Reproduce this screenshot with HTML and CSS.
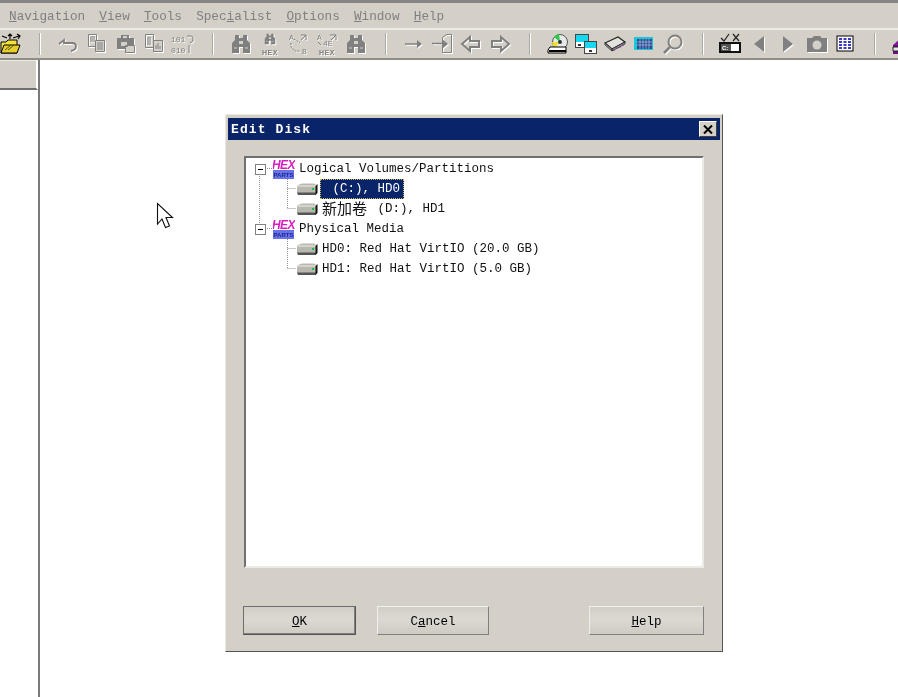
FILE: index.html
```html
<!DOCTYPE html>
<html lang="en">
<head>
<meta charset="utf-8">
<title>Edit Disk</title>
<link rel="stylesheet" href="styles.css">
</head>
<body>
<svg class="defs" width="0" height="0" aria-hidden="true">
  <defs>
    <symbol id="bino" viewBox="0 0 24 22">
      <path d="M6 2h4v3h4v-3h4v5l3 3v10h-7v-6h-4v6h-7v-10l3-3z" fill="currentColor"/>
      <path d="M10 8h4v3h-4z" fill="#d4d0c8"/>
      <path d="M5 15h3M16 15h3" stroke="#d4d0c8"/>
    </symbol>
    <symbol id="hexdisk" viewBox="0 0 22 14">
      <path d="M1 3.500L6 1.500H18L21 3.500V10.500L19 12.500H3L1 10.500Z" fill="#b8b8b0"/>
      <path d="M1 4H21" stroke="#f0f0ea"/>
      <path d="M1 10.500H20V13H2Z" fill="#555"/>
      <path d="M19.500 4L21.500 2V11L19.500 13Z" fill="#111"/>
      <rect x="16" y="6" width="2" height="2" fill="#17c23a"/>
    </symbol>
    <symbol id="hexlogo" viewBox="0 0 22 22">
      <rect x="0" y="12" width="21" height="9" fill="#6a72e8"/>
      <text x="10.500" y="11" class="logo-hex">HEX</text>
      <text x="10.500" y="19" class="logo-sub">PARTS</text>
    </symbol>
  </defs>
</svg>

<div class="app">
  <div class="topline"></div>

  <nav class="menubar">
    <span class="menu"><u>N</u>avigation</span>
    <span class="menu"><u>V</u>iew</span>
    <span class="menu"><u>T</u>ools</span>
    <span class="menu">Spec<u>i</u>alist</span>
    <span class="menu"><u>O</u>ptions</span>
    <span class="menu"><u>W</u>indow</span>
    <span class="menu"><u>H</u>elp</span>
  </nav>

  <div class="toolbar">
    <span class="slot slot-first">
      <svg width="24" height="22" viewBox="-1 0 24 22">
        <path d="M2 9h5l2-2h9v13H2z" fill="#f4e23c" stroke="#000"/>
        <path d="M2 20l3-8h16l-3 8z" fill="#e6cf2a" stroke="#000"/>
        <path d="M6 17l6-5M9 17l6-5" stroke="#5a5200"/>
        <path d="M11 6V1M9 3l2-2 2 2M14 5l6-2M18 1l3 2-2 3M8 5L3 3" fill="none" stroke="#000" stroke-width="1.200"/>
      </svg>
    </span>
    <i class="sep"></i>

    <span class="slot dis"><svg width="24" height="22" viewBox="0 0 24 22"><path d="M3 11l5-4v3h8q4 0 4 3.500t-5 4.500" fill="none" stroke="currentColor" stroke-width="1.800"/></svg></span>
    <span class="slot dis"><svg width="24" height="22" viewBox="0 0 24 22"><path d="M3.500 1.500h8v12h-8zM5 4h5M5 6h5M5 8h5" fill="none" stroke="currentColor"/><path d="M10.500 7.500h9v11h-9z" fill="#d4d0c8" stroke="currentColor"/><path d="M12 10h6M12 12h6M12 14h6M12 16h6" stroke="currentColor"/></svg></span>
    <span class="slot dis"><svg width="24" height="22" viewBox="0 0 24 22"><path d="M7 2h8v3h5v11H3V5h4z" fill="currentColor"/><path d="M9 3h4v2H9z" fill="#d4d0c8"/><path d="M6.500 8.500h7v5h-7zM11.500 12.500h9v7h-9z" fill="#d4d0c8" stroke="currentColor"/></svg></span>
    <span class="slot dis"><svg width="24" height="22" viewBox="0 0 24 22"><path d="M3.500 1.500h8v13h-8z" fill="none" stroke="currentColor"/><path d="M6 4v8M8 4v8" stroke="currentColor"/><path d="M11.500 7.500h9v11h-9z" fill="#d4d0c8" stroke="currentColor"/><path d="M14 16v-4M16 16v-6M18 16v-3" stroke="currentColor"/></svg></span>
    <span class="slot dis"><svg width="24" height="22" viewBox="0 0 24 22"><text x="0" y="9" class="mini">101</text><text x="0" y="20" class="mini">010</text><path d="M16 3h4q2 0 2 3v2l-3 2M18 20v-8" fill="none" stroke="currentColor"/></svg></span>
    <i class="sep"></i>

    <span class="slot dis"><svg width="24" height="22"><use href="#bino"/></svg></span>
    <span class="slot dis"><svg width="24" height="24" viewBox="0 0 24 24"><use href="#bino" x="5" y="0" width="14" height="14"/><text x="12" y="23" class="hexlabel">HEX</text></svg></span>
    <span class="slot dis"><svg width="24" height="24" viewBox="0 0 24 24"><text x="3" y="8" class="mini">A</text><text x="16" y="22" class="mini">B</text><path d="M8 7l6 4M5 11v4l4 4h5" fill="none" stroke="currentColor" stroke-dasharray="2 1"/><path d="M15 3h5v5M20 3l-5 5" fill="none" stroke="currentColor"/></svg></span>
    <span class="slot dis"><svg width="24" height="24" viewBox="0 0 24 24"><text x="2" y="8" class="mini">A</text><text x="8" y="14" class="mini">4E</text><text x="12" y="23" class="hexlabel">HEX</text><path d="M15 3h6v5M21 3l-5 5M3 10l3 3" fill="none" stroke="currentColor"/></svg></span>
    <span class="slot dis"><svg width="24" height="22"><use href="#bino"/></svg></span>
    <i class="sep"></i>

    <span class="slot dis"><svg width="24" height="22" viewBox="0 0 24 22"><path d="M3 11h16" stroke="currentColor" stroke-width="1.500"/><path d="M15 7l5 4-5 4z" fill="currentColor"/></svg></span>
    <span class="slot dis"><svg width="24" height="22" viewBox="0 0 24 22"><path d="M12.500 4.500l4-3h5v18h-9z" fill="none" stroke="currentColor"/><path d="M2 10.500h11" stroke="currentColor" stroke-width="1.500"/><path d="M12 6l6 5-6 5z" fill="currentColor"/></svg></span>
    <span class="slot dis"><svg width="24" height="22" viewBox="0 0 24 22"><path d="M11 4L3 11l8 7v-4h9V8h-9z" fill="none" stroke="currentColor" stroke-width="2"/></svg></span>
    <span class="slot dis"><svg width="24" height="22" viewBox="0 0 24 22"><path d="M13 4l8 7-8 7v-4H4V8h9z" fill="none" stroke="currentColor" stroke-width="2"/></svg></span>
    <i class="sep"></i>

    <span class="slot">
      <svg width="24" height="22" viewBox="0 0 24 22">
        <circle cx="14" cy="9" r="7.500" fill="#e8e8e8" stroke="#555"/>
        <path d="M14 9L8 4a8 8 0 0 1 5-3z" fill="#2bc94a"/>
        <path d="M14 9L9 15a8 8 0 0 1-3-6z" fill="#f0e030"/>
        <circle cx="14" cy="9" r="2" fill="#333"/>
        <path d="M4 14h16v6H2v-3z" fill="#fff" stroke="#000"/>
        <path d="M3 18h17" stroke="#000" stroke-width="2"/>
      </svg>
    </span>
    <span class="slot">
      <svg width="24" height="22" viewBox="0 0 24 22">
        <rect x="1.500" y="1.500" width="13" height="13" fill="#fff" stroke="#444"/>
        <rect x="2" y="2" width="12" height="7" fill="#18d8f0"/>
        <rect x="4" y="11" width="3" height="2" fill="#333"/>
        <rect x="10.500" y="8.500" width="12" height="12" fill="#fff" stroke="#444"/>
        <rect x="11" y="9" width="11" height="6" fill="#18d8f0"/>
        <rect x="15" y="17" width="3" height="2" fill="#333"/>
      </svg>
    </span>
    <span class="slot">
      <svg width="24" height="22" viewBox="0 0 24 22">
        <path d="M2 10L15 4l7 5-13 7z" fill="#e4e2dc" stroke="#222" stroke-width="1.100"/>
        <path d="M2 10v2l7 6v-2zM9 16v2l13-7V9z" fill="#999" stroke="#222" stroke-width=".7"/>
        <path d="M11 18v-2M14 16v-2M17 15v-2M20 13v-2" stroke="#7a3a9a"/>
      </svg>
    </span>
    <span class="slot">
      <svg width="24" height="22" viewBox="0 0 24 22">
        <rect x="2" y="4" width="19" height="13" fill="#18c8d8"/>
        <rect x="5" y="6" width="15" height="10" fill="#2a4a90"/>
        <path d="M8 6v10M11 6v10M14 6v10M17 6v10M5 9h15M5 12h15" stroke="#9fb4d8" stroke-width=".8"/>
      </svg>
    </span>
    <span class="slot dis"><svg width="24" height="22" viewBox="0 0 24 22"><circle cx="14" cy="9" r="6.500" fill="none" stroke="currentColor" stroke-width="2"/><path d="M9 14l-6 6" stroke="currentColor" stroke-width="2.500"/></svg></span>
    <i class="sep"></i>

    <span class="slot">
      <svg width="24" height="24" viewBox="0 0 24 24">
        <path d="M3 6l3 3 5-7" fill="none" stroke="#222" stroke-width="1.200"/>
        <path d="M15 2l6 7M21 2l-6 7" stroke="#222" stroke-width="1.200"/>
        <rect x="2" y="11" width="20" height="9" fill="#fff" stroke="#111" stroke-width="2"/>
        <path d="M3 12h10v7H3z" fill="#555"/>
        <text x="4" y="18" class="mini-w">C:</text>
      </svg>
    </span>
    <span class="slot dis"><svg width="24" height="22" viewBox="0 0 24 22"><path d="M17 3v16L7 11z" fill="currentColor"/></svg></span>
    <span class="slot dis"><svg width="24" height="22" viewBox="0 0 24 22"><path d="M7 3v16l10-8z" fill="currentColor"/></svg></span>
    <span class="slot dis"><svg width="24" height="22" viewBox="0 0 24 22"><path d="M2 5h5l2-2h6l2 2h5v14H2z" fill="currentColor"/><circle cx="12" cy="12" r="4.500" fill="#d4d0c8"/></svg></span>
    <span class="slot">
      <svg width="24" height="22" viewBox="0 0 24 22">
        <rect x="4" y="3" width="16" height="15" fill="#fff" stroke="#000"/>
        <path d="M6 6h3M10.500 6h3M15 6h3M6 9h3M10.500 9h3M15 9h3M6 12h3M10.500 12h3M15 12h3M6 15h3M10.500 15h3M15 15h3" stroke="#3a3ac0" stroke-width="2"/>
      </svg>
    </span>
    <i class="sep"></i>

    <span class="slot slot-last">
      <svg width="24" height="22" viewBox="0 0 24 22">
        <path d="M2 12L13 2h8v10L10 21H2z" fill="#8a1a9a"/>
        <path d="M2 12h8v9H2z" fill="#6a1080"/>
        <path d="M2 14h8v4H2z" fill="#e8e8e8" stroke="#222"/>
      </svg>
    </span>
  </div>

  <div class="workspace">
    <aside class="side">
      <div class="side-head"></div>
      <div class="side-body"></div>
    </aside>
    <main class="main"></main>
  </div>
</div>

<section class="dialog">
  <header class="titlebar">
    <span class="title">Edit Disk</span>
    <span class="close">
      <svg width="10" height="9" viewBox="0 0 10 9"><path d="M1 0.500l8 8M9 0.500l-8 8" stroke="#000" stroke-width="2"/></svg>
    </span>
  </header>

  <div class="tree">
    <svg class="tree-lines" width="70" height="130" viewBox="0 0 70 130" aria-hidden="true">
      <path d="M13.500 16V70M19 10.500H26M41.500 21V50M19 70.500H26M41.500 81V110M41.500 30.500H50M41.500 50.500H50M41.500 90.500H50M41.500 110.500H50" fill="none" stroke="#909090" stroke-dasharray="1 1"/>
    </svg>
    <div class="row">
      <span class="box"></span>
      <svg class="logo" width="22" height="22"><use href="#hexlogo"/></svg>
      <span class="label">Logical Volumes/Partitions</span>
    </div>
    <div class="row child">
      <svg class="disk" width="22" height="14"><use href="#hexdisk"/></svg>
      <span class="label selected"> (C:), HD0</span>
    </div>
    <div class="row child">
      <svg class="disk" width="22" height="14"><use href="#hexdisk"/></svg>
      <span class="label"><span class="cjk">新加卷</span> (D:), HD1</span>
    </div>
    <div class="row">
      <span class="box"></span>
      <svg class="logo" width="22" height="22"><use href="#hexlogo"/></svg>
      <span class="label">Physical Media</span>
    </div>
    <div class="row child">
      <svg class="disk" width="22" height="14"><use href="#hexdisk"/></svg>
      <span class="label">HD0: Red Hat VirtIO (20.0 GB)</span>
    </div>
    <div class="row child">
      <svg class="disk" width="22" height="14"><use href="#hexdisk"/></svg>
      <span class="label">HD1: Red Hat VirtIO (5.0 GB)</span>
    </div>
  </div>

  <footer class="actions">
    <button class="btn btn-default" type="button"><u>O</u>K</button>
    <button class="btn btn-cancel" type="button">C<u>a</u>ncel</button>
    <button class="btn btn-help" type="button"><u>H</u>elp</button>
  </footer>
</section>

<svg class="cursor" width="18" height="28" viewBox="0 0 18 28" aria-hidden="true">
  <path d="M1.500 1.500V22L6 17l3.500 8.500 4-1.500L10 15.500h6.500z" fill="#fff" stroke="#111" stroke-width="1.100"/>
</svg>
</body>
</html>
```
FILE: styles.css
```css
* { box-sizing: border-box; }

html, body {
  margin: 0;
  width: 898px;
  height: 697px;
  overflow: hidden;
  background: #fff;
}

body {
  position: relative;
  font-family: "Liberation Mono", "Noto Sans CJK SC", monospace;
  font-size: 12.5px;
  color: #000;
  filter: blur(0.35px);
}

.defs { position: absolute; }

.app {
  display: flex;
  flex-direction: column;
  height: 697px;
  background: #d4d0c8;
}

.topline {
  height: 3px;
  background: #858585;
  flex: none;
}

.menubar {
  display: flex;
  align-items: center;
  gap: 14.15px;
  height: 25px;
  padding: 2px 0 0 9px;
  flex: none;
  color: #808080;
  font-size: 12.7px;
}

.toolbar {
  display: flex;
  align-items: center;
  height: 32px;
  flex: none;
  border-top: 2px solid #ecebe6;
  border-bottom: 2px solid #8d8d8a;
  overflow: hidden;
}

.slot {
  display: flex;
  align-items: center;
  justify-content: center;
  flex: none;
  width: 28.75px;
  height: 26px;
}

.slot-first { margin-left: -4px; }
.slot-last { margin-right: -20px; }

.dis {
  color: #808080;
}

.dis svg {
  filter: drop-shadow(1px 1px 0 #fff);
}

.sep {
  flex: none;
  width: 2px;
  height: 22px;
  margin: 0 12.5px 0 14.5px;
  background: linear-gradient(90deg, #a8a8a4 50%, #fff 50%);
}

.mini {
  font: 8px "Liberation Mono", monospace;
  fill: currentColor;
}

.mini-w {
  font: bold 6px "Liberation Sans", sans-serif;
  fill: #fff;
}

.hexlabel {
  font: bold 7px "Liberation Sans", sans-serif;
  text-anchor: middle;
  fill: currentColor;
  letter-spacing: 0.5px;
}

.logo-hex {
  font: italic bold 12px "Liberation Sans", sans-serif;
  text-anchor: middle;
  fill: #d81ec0;
  letter-spacing: -0.5px;
}

.logo-sub {
  font: bold 6px "Liberation Sans", sans-serif;
  text-anchor: middle;
  fill: #1a2a90;
}

.workspace {
  flex: 1;
  display: flex;
  min-height: 0;
}

.side {
  flex: none;
  width: 40px;
  display: flex;
  flex-direction: column;
  border-right: 2px solid #7a7a7a;
  background: #fff;
}

.side-head {
  height: 30px;
  background: #d4d0c8;
  border-top: 1px solid #ecebe6;
  border-right: 2px solid #fff;
  border-bottom: 2px solid #707070;
}

.side-body { flex: 1; }

.main {
  flex: 1;
  background: #fff;
}

.dialog {
  position: absolute;
  left: 225px;
  top: 114px;
  width: 498px;
  height: 538px;
  display: flex;
  flex-direction: column;
  padding: 3px 2px 3px 2px;
  background: #d4d0c8;
  border: 1px solid;
  border-color: #eceae5 #555 #555 #eceae5;
}

.titlebar {
  display: flex;
  align-items: center;
  justify-content: space-between;
  flex: none;
  height: 22px;
  padding: 0 3px;
  background: #0a246a;
}

.title {
  color: #fff;
  font-weight: bold;
  font-size: 13px;
  letter-spacing: 1.1px;
}

.close {
  display: flex;
  align-items: center;
  justify-content: center;
  width: 18px;
  height: 16px;
  background: #d4d0c8;
  border: 1px solid;
  border-color: #fff #404040 #404040 #fff;
}

.tree {
  position: relative;
  flex: none;
  width: 460px;
  height: 412px;
  margin: 16px 0 0 16px;
  padding: 1px 0 0;
  background: #fff;
  border: 2px solid;
  border-color: #707070 #eceae5 #eceae5 #707070;
}

.tree-lines {
  position: absolute;
  left: 0;
  top: 0;
}

.row {
  position: relative;
  display: flex;
  align-items: center;
  height: 20px;
  padding-left: 9px;
  white-space: pre;
  font-size: 12.5px;
  color: #111;
}

.child { padding-left: 50px; }

.box {
  flex: none;
  width: 11px;
  height: 11px;
  margin-right: 7px;
  border: 1px solid #808080;
  background: linear-gradient(#000, #000) center / 5px 1px no-repeat #fff;
}

.logo {
  flex: none;
  margin-right: 4px;
}

.disk {
  flex: none;
  margin-right: 4px;
}

.label {
  display: inline-block;
  height: 20px;
  line-height: 20px;
}

.cjk {
  display: inline-block;
  height: 20px;
  margin-right: 3px;
  vertical-align: top;
  line-height: 18px;
  font-family: "Noto Sans CJK SC", sans-serif;
  font-size: 15px;
}

.selected {
  margin-left: -2px;
  padding: 0 4px 0 5px;
  background: #0a246a;
  color: #fff;
  outline: 1px dotted #c8b860;
  outline-offset: -1px;
}

.actions {
  display: flex;
  align-items: flex-start;
  flex: none;
  margin-top: 38px;
  padding-left: 15px;
}

.btn {
  height: 29px;
  padding: 2px 0 0;
  font: 12.5px "Liberation Mono", monospace;
  color: #000;
  background: linear-gradient(#d2cec6, #dcd9d3 45%, #cfcbc3);
  border: 1px solid;
  border-color: #f0eeea #808080 #808080 #f0eeea;
}

.btn-default {
  width: 113px;
  border-color: #6e6e6e #555 #555 #6e6e6e;
  box-shadow: inset -1px -1px 0 #808080;
}

.btn-cancel {
  width: 112px;
  margin-left: 21px;
}

.btn-help {
  width: 115px;
  margin-left: 100px;
}

.cursor {
  position: absolute;
  left: 156px;
  top: 202px;
}
```
